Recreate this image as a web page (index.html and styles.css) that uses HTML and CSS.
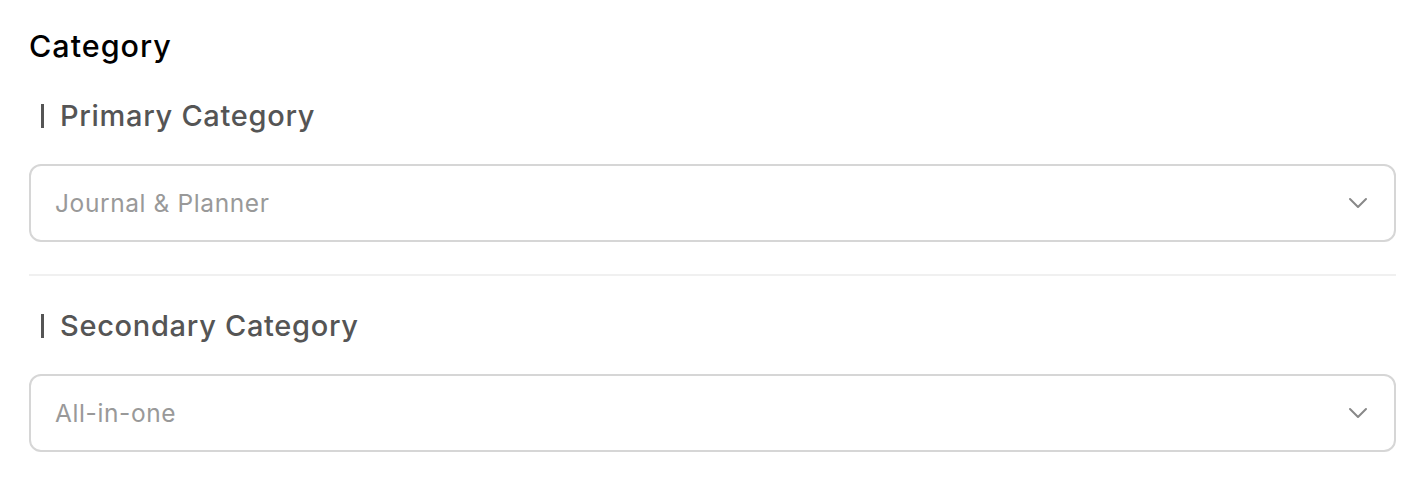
FILE: index.html
```html
<!DOCTYPE html>
<html>
<head>
<meta charset="utf-8">
<link rel="stylesheet" href="styles.css">
</head>
<body>
<div class="panel">
  <h2 class="title">Category</h2>
  <div class="field">
    <div class="label"><span class="bar"></span>Primary Category</div>
    <div class="select">
      <span class="value">Journal &amp; Planner</span>
      <svg class="chev" width="20" height="12" viewBox="0 0 20 12"><path d="M2 2 L10 10 L18 2" fill="none" stroke="#888" stroke-width="2" stroke-linecap="round" stroke-linejoin="round"/></svg>
    </div>
  </div>
  <div class="divider"></div>
  <div class="field">
    <div class="label"><span class="bar"></span>Secondary Category</div>
    <div class="select">
      <span class="value">All-in-one</span>
      <svg class="chev" width="20" height="12" viewBox="0 0 20 12"><path d="M2 2 L10 10 L18 2" fill="none" stroke="#888" stroke-width="2" stroke-linecap="round" stroke-linejoin="round"/></svg>
    </div>
  </div>
</div>
</body>
</html>
```
FILE: styles.css
```css
html, body {
  margin: 0;
  padding: 0;
  background: #fff;
}
body {
  font-family: Inter, "Noto Sans", sans-serif;
}
.panel {
  padding: 26px 28px 0 29px;
}
.title {
  margin: 0;
  font-size: 30.5px;
  font-weight: 500;
  color: #000;
  line-height: 40px;
  letter-spacing: 1px;
}
.field {
  display: flex;
  flex-direction: column;
}
.label {
  display: flex;
  align-items: center;
  margin-top: 32px;
  padding-left: 12px;
  font-size: 29px;
  font-weight: 500;
  color: #555;
  line-height: 36px;
  letter-spacing: 0.7px;
}
.bar {
  width: 3px;
  height: 24px;
  background: #555;
  margin-right: 16px;
}
.select {
  margin-top: 30px;
  height: 74px;
  border: 2px solid #d6d6d6;
  border-radius: 12px;
  display: flex;
  align-items: center;
  justify-content: space-between;
  padding: 0 26px 0 24px;
}
.value {
  font-size: 24.5px;
  color: #999;
  letter-spacing: 0.6px;
}
.chev {
  display: block;
}
.divider {
  height: 2px;
  background: #f0f0f0;
  margin-top: 32px;
}
.divider + .field .label {
  margin-top: 32px;
}
```
